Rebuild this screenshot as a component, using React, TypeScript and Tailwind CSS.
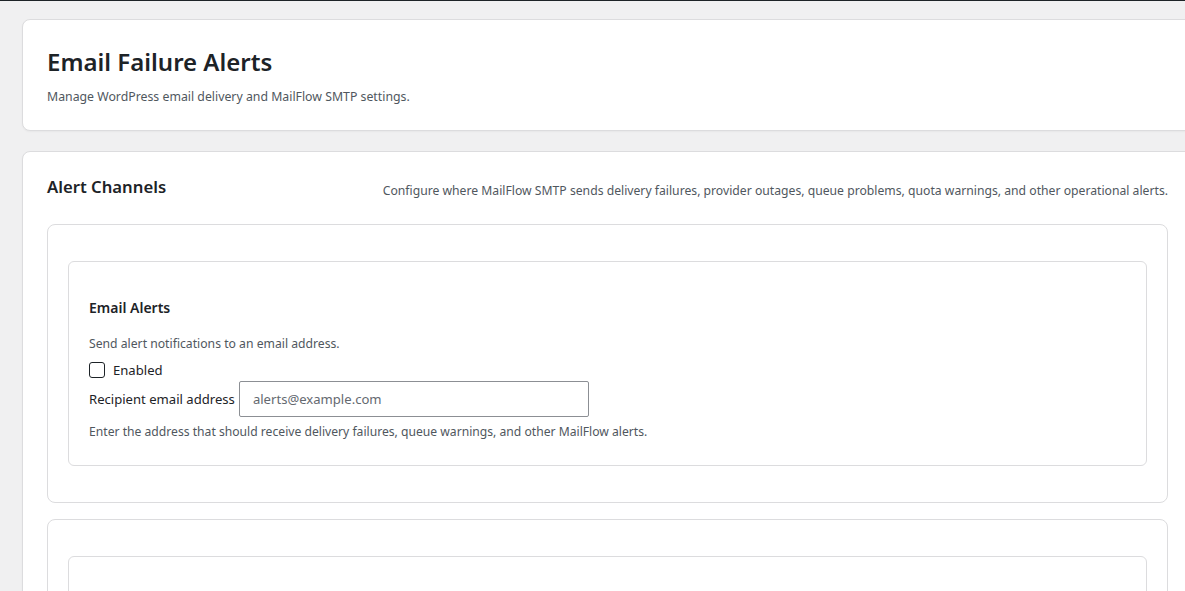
export default function App() {
  return (
    <div className="h-[591px] w-full overflow-hidden border-t border-[#1d2327] bg-[#f0f0f1] font-['Noto_Sans',sans-serif] text-[#1d2327]">
      <div className="ml-[22px] mt-[18px] flex w-[1171px] flex-col gap-[20px]">
        {/* Page header */}
        <div className="rounded-lg border border-[#dcdcde] bg-white px-[24px] pb-[23px] pt-[26px] shadow-[0_1px_2px_rgba(0,0,0,0.04)]">
          <h1 className="text-[24px] font-semibold leading-[32px]">Email Failure Alerts</h1>
          <p className="mt-[9px] text-[12.3px] leading-[20px] text-[#50575e]">
            Manage WordPress email delivery and MailFlow SMTP settings.
          </p>
        </div>

        {/* Alert channels */}
        <div className="rounded-lg border border-[#dcdcde] bg-white px-[24px] pt-[22px] shadow-[0_1px_2px_rgba(0,0,0,0.04)]">
          <div className="flex items-start justify-between">
            <h2 className="text-[16.7px] font-semibold leading-[26px]">Alert Channels</h2>
            <p className="mt-[7px] text-[12.2px] leading-[20px] text-[#50575e]">
              Configure where MailFlow SMTP sends delivery failures, provider outages, queue problems, quota warnings, and other operational alerts.
            </p>
          </div>

          <div className="mt-[23px] flex flex-col gap-[16px]">
            <div className="rounded-lg border border-[#dcdcde] px-[20px] py-[36px]">
              <div className="rounded-md border border-[#dcdcde] px-[20px] pb-[23px] pt-[36px]">
                <h3 className="text-[14px] font-semibold leading-[20px]">Email Alerts</h3>
                <p className="mt-[16px] text-[12.2px] leading-[20px] text-[#50575e]">
                  Send alert notifications to an email address.
                </p>
                <label className="mt-[6px] flex items-center gap-[8px] text-[13.1px] leading-[20px]">
                  <span className="h-[16px] w-[16px] rounded-[3px] border border-[#1d2327] bg-white" />
                  Enabled
                </label>
                <div className="mt-[1px] flex items-center gap-[4px]">
                  <span className="text-[13.1px] leading-[20px]">Recipient email address</span>
                  <input
                    type="text"
                    placeholder="alerts@example.com"
                    className="h-[36px] w-[350px] rounded-[2px] border border-[#8c8f94] px-[13px] text-[13.1px] text-[#1d2327] outline-none placeholder:text-[#646970]"
                  />
                </div>
                <p className="mt-[5px] text-[12.15px] leading-[20px] text-[#50575e]">
                  Enter the address that should receive delivery failures, queue warnings, and other MailFlow alerts.
                </p>
              </div>
            </div>

            <div className="h-[120px] rounded-lg border border-[#dcdcde] px-[20px] pt-[36px]">
              <div className="h-[200px] rounded-md border border-[#dcdcde]" />
            </div>
          </div>
        </div>
      </div>
    </div>
  );
}
